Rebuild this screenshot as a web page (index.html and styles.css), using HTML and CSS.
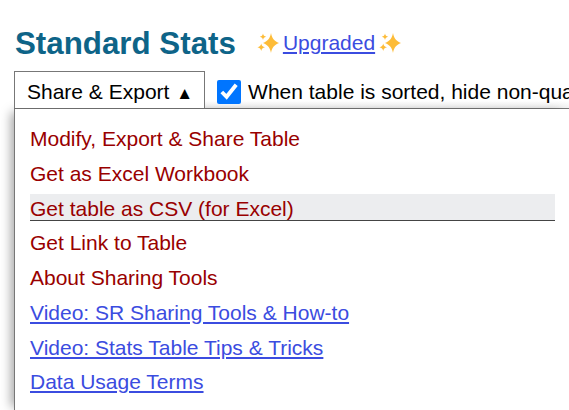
FILE: index.html
```html
<!DOCTYPE html>
<html>

<head>
    <title>Standard Stats</title>
    <link rel="stylesheet" href="styles.css">
</head>

<body>
    <div class="heading">
        <h2>Standard Stats</h2>
        <div class="upgraded">
            <svg class="sparkle" viewBox="0 0 22 22"><use href="#sparkle"></use></svg>
            <a href="#">Upgraded</a>
            <svg class="sparkle" viewBox="0 0 22 22"><use href="#sparkle"></use></svg>
        </div>
    </div>

    <div class="filter">
        <div class="tab">Share &amp; Export <span class="arrow">▲</span></div>
        <label class="hide"><input type="checkbox" checked>When table is sorted, hide non-qualifiers</label>
    </div>

    <div class="panel">
        <ul class="menu">
            <li><a class="tool" href="#">Modify, Export &amp; Share Table</a></li>
            <li><a class="tool" href="#">Get as Excel Workbook</a></li>
            <li class="current"><a class="tool" href="#">Get table as CSV (for Excel)</a></li>
            <li><a class="tool" href="#">Get Link to Table</a></li>
            <li><a class="tool" href="#">About Sharing Tools</a></li>
            <li><a href="#">Video: SR Sharing Tools &amp; How-to</a></li>
            <li><a href="#">Video: Stats Table Tips &amp; Tricks</a></li>
            <li><a href="#">Data Usage Terms</a></li>
        </ul>
    </div>

    <svg class="defs" width="0" height="0">
        <symbol id="sparkle" viewBox="0 0 22 22">
            <path fill="#fdbc38" d="M14 1c1.100 5.400 2.900 7.800 8 10-5.100 2.200-6.900 4.600-8 10-1.100-5.400-2.900-7.800-8-10 5.100-2.200 6.900-4.600 8-10z"></path>
            <path fill="#fdbc38" d="M6 1.500c.4 2 1.200 2.800 3.200 3.300-2 .5-2.800 1.300-3.200 3.300-.4-2-1.200-2.800-3.200-3.300 2-.5 2.800-1.300 3.200-3.300z"></path>
            <path fill="#fdbc38" d="M4.200 11.500c.5 2.400 1.400 3.200 3.800 3.800-2.400.6-3.300 1.400-3.800 3.800-.5-2.400-1.400-3.200-3.800-3.800 2.400-.6 3.300-1.400 3.800-3.800z"></path>
        </symbol>
    </svg>
</body>

</html>
```

FILE: styles.css
```css
html,
body {
    height: 100%;
    overflow: hidden;
}

body {
    font-family: "Liberation Sans", Arial, sans-serif;
    font-size: 21px;
    margin: 0;
    padding: 0 0 0 14px;
    background-color: #fff;
    color: #000;
    white-space: nowrap;
}

a {
    color: #3b4ce0;
}

.heading {
    display: flex;
    align-items: center;
    height: 71px;
    padding: 17px 0 0 1px;
    box-sizing: border-box;
}

h2 {
    margin: 0;
    font-size: 31.3px;
    font-weight: bold;
    color: #0e6488;
}

.upgraded {
    display: flex;
    align-items: center;
    margin: -2px 0 0 21px;
}

.sparkle {
    width: 22px;
    height: 22px;
}

.upgraded a {
    margin: 0 4px;
}

.defs {
    position: absolute;
}

.filter {
    display: flex;
    align-items: flex-start;
    height: 38px;
    box-sizing: border-box;
    border-bottom: 1px solid #777;
    background-image: linear-gradient(to bottom, #fff 80%, #f1f1f1);
    overflow: hidden;
}

.tab {
    height: 38px;
    box-sizing: border-box;
    padding: 8px 11px 0 12px;
    border: 1px solid #777;
    border-bottom: none;
    background-color: #fff;
}

.arrow {
    font-size: 17px;
    margin-left: 1px;
}

.hide {
    display: flex;
    align-items: center;
    margin: 9px 0 0 12px;
    line-height: 24px;
}

.hide input {
    flex: none;
    width: 24px;
    height: 24px;
    margin: 0 7px 0 0;
    accent-color: #0075ff;
}

.panel {
    height: 301px;
    box-sizing: border-box;
    border-left: 1px solid #777;
    box-shadow: -6px 0 10px -3px rgba(0, 0, 0, 0.35);
    padding: 16.4px 14px 0 15px;
    background-color: #fff;
}

.menu {
    margin: 0;
    padding: 0;
    list-style: none;
}

.menu li {
    height: 27px;
    line-height: 28px;
    margin-bottom: 7.7px;
}

.menu .tool {
    color: #990000;
    text-decoration: none;
}

.menu .current {
    margin-top: -1px;
    margin-bottom: 8.7px;
    line-height: 30px;
    background-color: #ecedef;
    border-bottom: 1px solid #444;
    box-sizing: border-box;
}
```
